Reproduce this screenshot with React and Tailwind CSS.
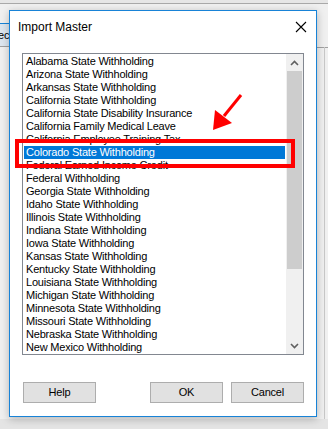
const items = [
  "Alabama State Withholding",
  "Arizona State Withholding",
  "Arkansas State Withholding",
  "California State Withholding",
  "California State Disability Insurance",
  "California Family Medical Leave",
  "California Employee Training Tax",
  "Colorado State Withholding",
  "Federal Earned Income Credit",
  "Federal Withholding",
  "Georgia State Withholding",
  "Idaho State Withholding",
  "Illinois State Withholding",
  "Indiana State Withholding",
  "Iowa State Withholding",
  "Kansas State Withholding",
  "Kentucky State Withholding",
  "Louisiana State Withholding",
  "Michigan State Withholding",
  "Minnesota State Withholding",
  "Missouri State Withholding",
  "Nebraska State Withholding",
  "New Mexico Withholding",
];

const selected = "Colorado State Withholding";

function Chevron({ up }) {
  return (
    <svg width="9" height="6" viewBox="0 0 9 6" fill="none">
      <path
        d={up ? "M1 5 L4.5 1.5 L8 5" : "M1 1 L4.5 4.5 L8 1"}
        stroke="#606060"
        strokeWidth="1.6"
      />
    </svg>
  );
}

function Button({ children }) {
  return (
    <button className="flex h-[21px] w-[73px] items-center justify-center border border-[#adadad] bg-[#e1e1e1] text-[11px] tracking-[-0.2px] text-black">
      {children}
    </button>
  );
}

export default function App() {
  return (
    <div
      className="relative h-[429px] w-[328px] overflow-hidden bg-[#f0f0f0]"
      style={{ fontFamily: '"Liberation Sans", Arial, sans-serif' }}
    >
      {/* window behind the dialog */}
      <div className="absolute left-0 top-0 h-[3px] w-full bg-[#e6e6e6]" />
      <div className="absolute left-0 top-[3px] h-px w-full bg-[#a9a9a9]" />
      <div className="absolute left-0 top-[23px] flex h-[24px] w-[12px] items-center overflow-hidden border-y border-t-[#1883d7] border-b-[#a0a0a0] bg-[#dde6ef] text-[11px] text-black">
        <span className="-ml-[2px]">ec</span>
      </div>
      <div className="absolute right-0 top-[47px] h-px w-[12px] bg-[#a0a0a0]" />
      <div className="absolute right-[3px] top-[47px] h-[382px] w-px bg-[#c8c8c8]" />
      <div className="absolute bottom-0 left-0 h-[10px] w-full bg-[#e4e4e4]" />

      {/* dialog */}
      <div className="absolute left-[9px] top-[10px] flex h-[407px] w-[308px] flex-col border border-[#1883d7] bg-white shadow-[0_2px_8px_rgba(0,0,0,0.25)]">
        <div className="flex h-[42px] items-start justify-between pl-[8px] pr-[9px] pt-[7px]">
          <span className="text-[12px] text-black">Import Master</span>
          <svg width="12" height="12" viewBox="0 0 12 12" className="mt-[3px]">
            <path d="M1 1 L11 11 M11 1 L1 11" stroke="#000" strokeWidth="1.1" />
          </svg>
        </div>

        <div className="ml-[12px] flex h-[302px] w-[282px] border border-[#828790]">
          <div className="flex flex-1 flex-col px-px pt-px">
            {items.map((name) => (
              <div
                key={name}
                className={
                  "flex h-[13px] items-center whitespace-nowrap pl-[2px] text-[11px] leading-[13px] tracking-[-0.2px] " +
                  (name === selected
                    ? "bg-[#0078d7] text-white"
                    : "text-black")
                }
              >
                {name}
              </div>
            ))}
          </div>
          <div className="flex w-[17px] flex-col bg-[#f0f0f0]">
            <div className="flex h-[17px] items-center justify-center">
              <Chevron up />
            </div>
            <div className="mx-px h-[198px] bg-[#cdcdcd]" />
            <div className="flex-1" />
            <div className="flex h-[17px] items-center justify-center">
              <Chevron />
            </div>
          </div>
        </div>

        <div className="mt-[27px] flex pl-[13px]">
          <Button>Help</Button>
          <div className="ml-[54px]">
            <Button>OK</Button>
          </div>
          <div className="ml-[8px]">
            <Button>Cancel</Button>
          </div>
        </div>
      </div>

      {/* annotation */}
      <svg
        className="pointer-events-none absolute left-0 top-0"
        width="328"
        height="429"
        viewBox="0 0 328 429"
      >
        <rect
          x="17"
          y="141"
          width="276"
          height="25"
          fill="none"
          stroke="#ff0000"
          strokeWidth="4"
        />
        <path d="M241 95 L224 116" stroke="#ff0000" strokeWidth="3" />
        <path d="M213 130 L215 110 L232 123 Z" fill="#ff0000" />
      </svg>
    </div>
  );
}
